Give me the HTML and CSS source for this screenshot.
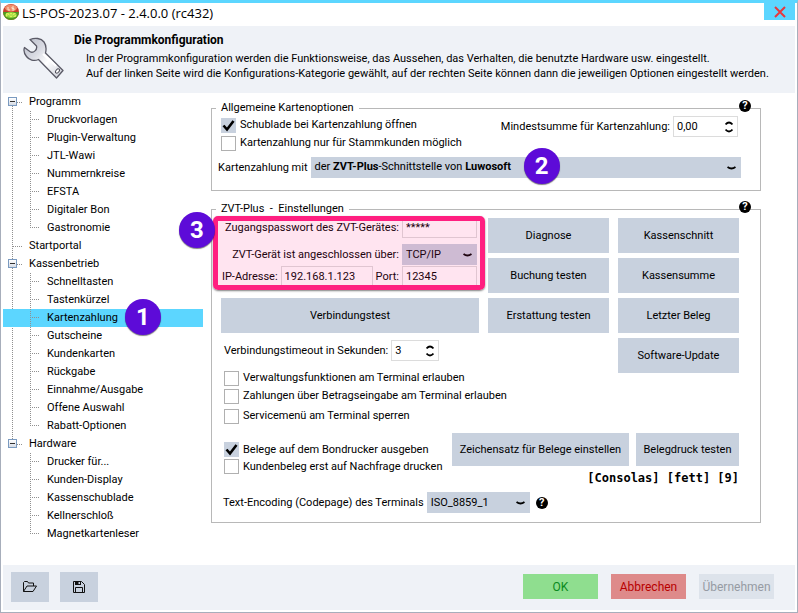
FILE: index.html
```html
<!DOCTYPE html>
<html lang="de">

<head>
    <meta charset="UTF-8">
    <meta name="viewport" content="width=device-width, initial-scale=1.0">
    <title>LS-POS-2023.07 - 2.4.0.0 (rc432)</title>
    <link rel="stylesheet" href="styles.css">
</head>

<body>
    <div class="window">
        <div class="titlebar">
            <svg class="logo" width="16" height="16" viewBox="0 0 16 16" aria-hidden="true">
                <circle cx="8" cy="8" r="8" fill="#c8402c"/>
                <path d="M0 8a8 8 0 0 0 16 0z" fill="#4f9a22"/>
                <ellipse cx="8" cy="4" rx="6" ry="3.5" fill="#ee8d6c"/>
                <ellipse cx="8" cy="11" rx="6" ry="3" fill="#8fd33c"/>
                <path d="M5 3v3h2M11 3H9v1.500h2V6H9" fill="none" stroke="#fbe3c8"/>
                <path d="M3.500 12.500v-3h2v1.500h-2M7 9.500h2v3H7zM12.500 9.500h-2v1.500h2v1.500h-2" fill="none" stroke="#d8f25a"/>
            </svg>
            <span class="title">LS-POS-2023.07 - 2.4.0.0 (rc432)</span>
            <button type="button" class="close" aria-label="Schließen">
                <svg width="12" height="12" viewBox="0 0 12 12"><path d="M1 1l10 10M11 1L1 11" stroke="#e8383d" stroke-width="2"/></svg>
            </button>
        </div>

        <header class="header">
            <svg class="wrench" width="42" height="42" viewBox="0 0 42 42" aria-hidden="true">
                <defs>
                    <linearGradient id="steel" x1="0" y1="0" x2="1" y2="1">
                        <stop offset="0" stop-color="#b9bdc9"/>
                        <stop offset=".35" stop-color="#d9dbe3"/>
                        <stop offset=".6" stop-color="#ffffff"/>
                        <stop offset="1" stop-color="#c9ccd6"/>
                    </linearGradient>
                </defs>
                <path d="M7 2.500C12 .5 18 1 21 5c2.500 3.500 2.500 7 1.500 11L40 33.500 33.500 41 15.500 22.500C11 24.500 6 23 3.500 19.500.8 16 .5 13 1.500 10.500l6 4.500c3 1 7-2 6-6z" fill="url(#steel)" stroke="#5a5a66" stroke-width="1.300" stroke-linejoin="round"/>
                <path d="M20 17l13 12" stroke="#fff" stroke-width="2"/>
                <ellipse cx="34.500" cy="34" rx="1.500" ry="2.500" transform="rotate(40 34.500 34)" fill="#fff" stroke="#4d4d58"/>
            </svg>
            <div>
                <h1>Die Programmkonfiguration</h1>
                <p>In der Programmkonfiguration werden die Funktionsweise, das Aussehen, das Verhalten, die benutzte Hardware usw. eingestellt.<br>
                    Auf der linken Seite wird die Konfigurations-Kategorie gewählt, auf der rechten Seite können dann die jeweiligen Optionen eingestellt werden.</p>
            </div>
        </header>

        <div class="content">
            <nav class="tree">
                <ul>
                    <li class="node">Programm
                        <ul>
                            <li>Druckvorlagen</li>
                            <li>Plugin-Verwaltung</li>
                            <li>JTL-Wawi</li>
                            <li>Nummernkreise</li>
                            <li>EFSTA</li>
                            <li>Digitaler Bon</li>
                            <li>Gastronomie</li>
                        </ul>
                    </li>
                    <li>Startportal</li>
                    <li class="node">Kassenbetrieb
                        <ul>
                            <li>Schnelltasten</li>
                            <li>Tastenkürzel</li>
                            <li class="selected">Kartenzahlung<span class="badge badge-1">1</span></li>
                            <li>Gutscheine</li>
                            <li>Kundenkarten</li>
                            <li>Rückgabe</li>
                            <li>Einnahme/Ausgabe</li>
                            <li>Offene Auswahl</li>
                            <li>Rabatt-Optionen</li>
                        </ul>
                    </li>
                    <li class="node">Hardware
                        <ul>
                            <li>Drucker für...</li>
                            <li>Kunden-Display</li>
                            <li>Kassenschublade</li>
                            <li>Kellnerschloß</li>
                            <li>Magnetkartenleser</li>
                        </ul>
                    </li>
                </ul>
            </nav>

            <main class="options">
                <fieldset class="general">
                    <legend>Allgemeine Kartenoptionen</legend>
                    <button type="button" class="help help-corner" aria-label="Hilfe">?</button>
                    <div class="general-top">
                        <div class="checks">
                            <label class="check"><input type="checkbox" checked>Schublade bei Kartenzahlung öffnen</label>
                            <label class="check"><input type="checkbox">Kartenzahlung nur für Stammkunden möglich</label>
                        </div>
                        <div class="field">
                            <label for="minimum">Mindestsumme für Kartenzahlung:</label>
                            <input type="text" id="minimum" class="spin spin-wide" value="0,00" inputmode="decimal">
                        </div>
                    </div>
                    <div class="field provider">
                        <label for="provider">Kartenzahlung mit</label>
                        <div class="rich-select">
                            <select id="provider">
                                <option aria-label="der ZVT-Plus-Schnittstelle von Luwosoft"></option>
                            </select>
                            <span class="rich-value">der <b>ZVT-Plus</b>-Schnittstelle von <b>Luwosoft</b></span>
                            <span class="badge badge-2">2</span>
                        </div>
                    </div>
                </fieldset>

                <fieldset class="zvt">
                    <legend>ZVT-Plus &nbsp;- &nbsp;Einstellungen</legend>
                    <button type="button" class="help help-corner" aria-label="Hilfe">?</button>
                    <div class="zvt-top">
                        <div class="terminal">
                            <div class="connection">
                                <div class="field">
                                    <label for="password">Zugangspasswort des ZVT-Gerätes:</label>
                                    <input type="text" id="password" class="short" value="*****">
                                </div>
                                <div class="field via">
                                    <label for="via">ZVT-Gerät ist angeschlossen über:</label>
                                    <select id="via" class="short">
                                        <option>TCP/IP</option>
                                    </select>
                                </div>
                                <div class="field">
                                    <label for="ip">IP-Adresse:</label>
                                    <input type="text" id="ip" class="ip" value="192.168.1.123">
                                    <label for="port">Port:</label>
                                    <input type="text" id="port" class="short" value="12345">
                                </div>
                                <div class="highlight"></div>
                                <span class="badge badge-3">3</span>
                            </div>
                            <button type="button" class="btn btn-test">Verbindungstest</button>
                            <div class="field timeout">
                                <label for="timeout">Verbindungstimeout in Sekunden:</label>
                                <input type="text" id="timeout" class="spin" value="3" inputmode="numeric">
                            </div>
                            <div class="checks terminal-checks">
                                <label class="check"><input type="checkbox">Verwaltungsfunktionen am Terminal erlauben</label>
                                <label class="check"><input type="checkbox">Zahlungen über Betragseingabe am Terminal erlauben</label>
                                <label class="check"><input type="checkbox">Servicemenü am Terminal sperren</label>
                            </div>
                        </div>
                        <div class="actions">
                            <button type="button" class="btn">Diagnose</button>
                            <button type="button" class="btn">Buchung testen</button>
                            <button type="button" class="btn">Erstattung testen</button>
                        </div>
                        <div class="actions">
                            <button type="button" class="btn">Kassenschnitt</button>
                            <button type="button" class="btn">Kassensumme</button>
                            <button type="button" class="btn">Letzter Beleg</button>
                            <button type="button" class="btn">Software-Update</button>
                        </div>
                    </div>
                    <div class="receipts">
                        <div class="checks">
                            <label class="check"><input type="checkbox" checked>Belege auf dem Bondrucker ausgeben</label>
                            <label class="check"><input type="checkbox">Kundenbeleg erst auf Nachfrage drucken</label>
                        </div>
                        <div class="receipt-actions">
                            <button type="button" class="btn btn-charset">Zeichensatz für Belege einstellen</button>
                            <button type="button" class="btn btn-print">Belegdruck testen</button>
                            <div class="font-info">[Consolas] [fett] [9]</div>
                        </div>
                    </div>
                    <div class="field encoding">
                        <label for="encoding">Text-Encoding (Codepage) des Terminals</label>
                        <select id="encoding">
                            <option>ISO_8859_1</option>
                        </select>
                        <button type="button" class="help" aria-label="Hilfe">?</button>
                    </div>
                </fieldset>
            </main>
        </div>

        <footer class="footer">
            <button type="button" class="btn btn-icon" aria-label="Öffnen">
                <svg width="16" height="14" viewBox="0 0 16 14"><path d="M1.500 11.500v-9l1-1h3l1 1.500h5v3M1.500 11.500L5 6h9.500L11 11.500z" fill="none" stroke="#111" stroke-linejoin="round"/></svg>
            </button>
            <button type="button" class="btn btn-icon" aria-label="Speichern">
                <svg width="14" height="14" viewBox="0 0 14 14"><path d="M1.500 1.500h8l3 3v8h-11zM3.500 12V7.500h7V12" fill="none" stroke="#111"/><path d="M3 1h6v4H3z" fill="#111"/><path d="M6.500 2h1.500v2H6.500z" fill="#c8d1de"/></svg>
            </button>
            <div class="dialog-buttons">
                <button type="submit" class="btn btn-ok">OK</button>
                <button type="button" class="btn btn-cancel">Abbrechen</button>
                <button type="button" class="btn btn-apply" disabled>Übernehmen</button>
            </div>
        </footer>
    </div>
</body>

</html>
```
FILE: styles.css
```css
* {
    box-sizing: border-box;
}

body {
    margin: 0;
    font-family: Roboto, "Liberation Sans", sans-serif;
    font-size: 11px;
    line-height: 16px;
    color: #000000;
    background-color: #ffffff;
}

button,
input,
select {
    margin: 0;
    font: inherit;
    color: inherit;
}

ul {
    list-style: none;
    margin: 0;
    padding: 0;
}

.window {
    display: flex;
    flex-direction: column;
    min-height: 100vh;
    padding: 0 2px 2px;
    border: 1px solid #a7aebb;
    border-top: 3px solid #5cd6ff;
}

/* title bar */
.titlebar {
    display: flex;
    align-items: flex-start;
    height: 23px;
}

.logo {
    margin-top: 1px;
}

.title {
    margin-left: 3px;
    font-family: "Open Sans", sans-serif;
    font-size: 13px;
    line-height: 20px;
}

.close {
    display: flex;
    align-items: center;
    justify-content: center;
    width: 31px;
    height: 17px;
    margin-left: auto;
    padding: 0;
    border: none;
    background-color: #5cd6ff;
}

/* header */
.header {
    display: flex;
    height: 67px;
    padding: 7px 0 0 20px;
    background-color: #eff2f7;
}

.wrench {
    flex: none;
    margin: 4px 9px 0 0;
}

h1 {
    margin: 0 0 3px;
    font-size: 12px;
    line-height: 15px;
}

.header p {
    margin: 0 0 0 12px;
    line-height: 15px;
    white-space: nowrap;
}

.content {
    flex: 1;
    display: flex;
}

/* category tree */
.tree {
    flex: none;
    width: 200px;
    line-height: 18px;
}

.tree > ul {
    background: repeating-linear-gradient(#909090 0 1px, transparent 1px 2px) 9px 9px / 1px 343px no-repeat;
}

.tree > ul > li {
    padding-left: 26px;
    background: repeating-linear-gradient(90deg, #909090 0 1px, transparent 1px 2px) 10px 9px / 10px 1px no-repeat;
}

.tree > ul > .node {
    background:
        linear-gradient(#303030, #303030) 7px 8px / 5px 1px no-repeat,
        linear-gradient(#ffffff, #d5dbe5) 6px 5px / 7px 7px no-repeat,
        linear-gradient(#7a9ac0, #7a9ac0) 5px 4px / 9px 9px no-repeat,
        repeating-linear-gradient(90deg, #909090 0 1px, transparent 1px 2px) 14px 9px / 6px 1px no-repeat;
}

.tree ul ul {
    margin-left: -26px;
}

.tree ul ul li {
    position: relative;
    padding-left: 44px;
    background:
        repeating-linear-gradient(#909090 0 1px, transparent 1px 2px) 27px 0 / 1px 18px no-repeat,
        repeating-linear-gradient(90deg, #909090 0 1px, transparent 1px 2px) 27px 8px / 10px 1px no-repeat;
}

.tree ul ul li:last-child {
    background-size: 1px 9px, 10px 1px;
}

.tree ul ul .selected {
    background-color: #5cd6ff;
}

.badge {
    position: absolute;
    z-index: 2;
    width: 36px;
    height: 36px;
    border-radius: 50%;
    background-color: #5d0bd8;
    box-shadow: 0 1px 1px rgba(0, 0, 0, 0.5);
    color: #ffffff;
    font-size: 24px;
    font-weight: bold;
    line-height: 36px;
    text-align: center;
}

.badge-1 {
    top: -10px;
    left: 122px;
}

.badge-2 {
    top: -9px;
    left: 213px;
}

.badge-3 {
    top: -5px;
    left: -42px;
}

/* option groups */
.options {
    flex: 1;
    min-width: 0;
    padding: 7px 34px 0 8px;
}

fieldset {
    position: relative;
    min-width: 0;
    margin: 0;
    border: 1px solid #b8b8b8;
}

legend {
    height: 16px;
    padding: 0 5px;
}

.general {
    padding: 0 19px 12px 6px;
}

.general legend {
    margin-left: -2px;
}

.zvt {
    margin-top: 10px;
    padding: 0 21px 9px 9px;
}

.zvt legend {
    margin-left: -5px;
}

.general-top {
    display: flex;
    justify-content: space-between;
    padding: 0 3px;
}

.checks {
    display: flex;
    flex-direction: column;
}

.check {
    display: flex;
    align-items: center;
    gap: 4px;
    height: 18px;
    white-space: nowrap;
}

input[type="checkbox"] {
    appearance: none;
    flex: none;
    width: 15px;
    height: 15px;
    border: 1px solid #b0b0b0;
    background-color: #ffffff;
}

input[type="checkbox"]:checked {
    border-color: #c8d1de;
    background: #c8d1de url("data:image/svg+xml,%3Csvg xmlns='http://www.w3.org/2000/svg' viewBox='0 0 13 13'%3E%3Cpath d='M1.500 6.500L5 10.500 11.500 2' fill='none' stroke='%23000' stroke-width='2.600'/%3E%3C/svg%3E") center / 13px 13px no-repeat;
}

.field {
    display: flex;
    align-items: center;
    justify-content: flex-end;
    gap: 3px;
    height: 21px;
    white-space: nowrap;
}

input[type="text"] {
    width: 75px;
    height: 21px;
    padding: 0 3px;
    border: 1px solid #dcdcdc;
    background-color: #ffffff;
}

input.spin {
    width: 48px;
    background: #ffffff url("data:image/svg+xml,%3Csvg xmlns='http://www.w3.org/2000/svg' viewBox='0 0 8 12'%3E%3Cpath d='M.5 3.500Q4-.5 7.500 3.500M.5 8.500Q4 12.500 7.500 8.500' fill='none' stroke='%23000' stroke-width='1.800'/%3E%3C/svg%3E") right 4px center / 8px 12px no-repeat;
}

input.spin-wide {
    width: 65px;
}

select {
    appearance: none;
    width: 103px;
    height: 21px;
    padding: 0 4px;
    border: none;
    border-radius: 0;
    background: #c8d1de url("data:image/svg+xml,%3Csvg xmlns='http://www.w3.org/2000/svg' viewBox='0 0 9 4'%3E%3Cpath d='M.5 1Q4.500 4 8.500 1' fill='none' stroke='%23000' stroke-width='1.800'/%3E%3C/svg%3E") right 5px center / 9px 4px no-repeat;
}

.provider {
    margin-top: 5px;
}

.rich-select {
    position: relative;
    flex: 1;
    height: 21px;
}

.rich-select select {
    display: block;
    width: 100%;
}

/* a select shows plain text only, so the formatted value lies over it */
.rich-value {
    position: absolute;
    top: 2px;
    left: 4px;
    pointer-events: none;
}

.zvt-top {
    display: flex;
    gap: 9px;
}

.terminal {
    flex: 1;
    min-width: 0;
}

.connection {
    position: relative;
    height: 81px;
    padding-right: 2px;
}

.connection input,
.connection select {
    flex: none;
}

.connection .short {
    width: 75px;
}

.connection .ip {
    width: 92px;
}

.via {
    margin: 6px 0 1px;
}

.highlight {
    position: absolute;
    inset: -1px -6px 8px -8px;
    border: 5px solid #ff1f80;
    border-radius: 5px;
    background-color: rgba(255, 31, 128, 0.12);
    box-shadow: 0 1px 2px rgba(0, 0, 0, 0.5);
    pointer-events: none;
}

.btn {
    height: 35px;
    padding: 0;
    border: none;
    background-color: #c8d1de;
}

.btn-test {
    width: 100%;
}

.timeout {
    justify-content: flex-start;
    margin: 7px 0 0 3px;
}

.actions {
    flex: none;
    display: flex;
    flex-direction: column;
    gap: 5px;
    width: 121px;
    padding-top: 1px;
}

.terminal-checks {
    padding: 8px 3px 0;
}

.terminal-checks .check:last-child {
    margin-top: 2px;
}

.receipts {
    display: flex;
    justify-content: space-between;
    margin-top: 8px;
}

.receipts .checks {
    padding: 8px 3px 0;
}

.receipts .check {
    height: 17px;
}

.receipt-actions {
    flex: none;
    display: flex;
    flex-wrap: wrap;
    gap: 4px 7px;
    width: 287px;
}

.receipt-actions .btn {
    height: 33px;
}

.btn-charset {
    flex: 1;
}

.btn-print {
    width: 103px;
}

.font-info {
    width: 100%;
    font-family: "DejaVu Sans Mono", monospace;
    font-size: 12px;
    font-weight: bold;
    text-align: right;
}

.encoding {
    justify-content: flex-start;
    margin-top: 6px;
    padding-left: 2px;
}

.help {
    width: 12px;
    height: 12px;
    padding: 0;
    border: none;
    border-radius: 50%;
    background-color: #000000;
    color: #ffffff;
    font-size: 11px;
    font-weight: bold;
    line-height: 12px;
}

.encoding .help {
    margin-left: 3px;
}

.help-corner {
    position: absolute;
    top: -16px;
    right: 9px;
}

/* footer */
.footer {
    display: flex;
    align-items: center;
    gap: 11px;
    height: 45px;
    padding: 0 21px 2px 8px;
    background-color: #eff2f7;
}

.btn-icon {
    display: flex;
    align-items: center;
    justify-content: center;
    width: 38px;
    height: 30px;
}

.dialog-buttons {
    display: flex;
    gap: 13px;
    margin-left: auto;
    font-size: 12px;
}

.dialog-buttons .btn {
    width: 75px;
    height: 25px;
}

.btn-ok {
    background-color: #8fde8f;
    color: #0c8a1e;
}

.btn-cancel {
    background-color: #de8a8a;
    color: #b80000;
}

.btn-apply {
    background-color: #dde3eb;
    color: #969ba3;
}
```
